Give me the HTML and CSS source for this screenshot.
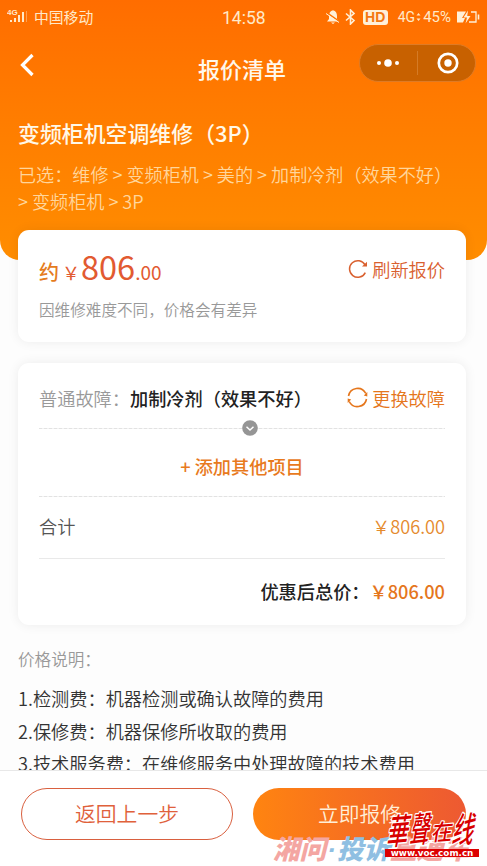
FILE: index.html
```html
<!DOCTYPE html>
<html lang="zh-CN">
<head>
<meta charset="utf-8">
<title>报价清单</title>
<link rel="stylesheet" href="styles.css">
</head>
<body>
<div class="screen">
  <header class="hero">
    <div class="status">
      <svg class="signal" width="22" height="18" viewBox="0 0 22 18"><g fill="#ffe9c8"><rect x="3" y="12" width="2" height="2"/><rect x="7" y="10" width="2" height="4"/><rect x="11" y="7" width="2" height="7"/><rect x="15" y="4" width="2" height="10"/><rect x="19" y="3" width="1" height="11" opacity=".4"/></g><text x="0" y="7" class="tiny">4G</text></svg>
      <span class="carrier">中国移动</span>
      <span class="clock">14:58</span>
      <div class="indicators">
        <svg width="14" height="16" viewBox="0 0 14 16"><path d="M7 1.200C4.200 1.800 3 4 3 7v3L1 12.500h12L11 10V7C11 4 9.800 1.800 7 1.200zM5 13.500h4L7 15z" fill="#fff0d8"/><path d="M0 3l14 10" stroke="#ff7400" stroke-width="1.500"/><path d="M0 4.500l13 9" stroke="#fff0d8"/></svg>
        <svg width="11" height="16" viewBox="0 0 11 16"><path d="M1 4.500l8 7L5.500 15V1L9 4.500l-8 7" fill="none" stroke="#fff0d8" stroke-width="1.600"/></svg>
        <span class="hd">HD</span>
        <span class="net">4G<svg width="5" height="10" viewBox="0 0 5 10"><path d="M.5 3.500L2.500 1l2 2.500zM.5 6.500L2.500 9l2-2.500z" fill="#ffe9c8"/></svg></span>
        <span class="percent">45%</span>
        <svg class="battery" width="24" height="14" viewBox="0 0 24 14"><path d="M1 1.500h9L6 8h3l-2 4.500H1z" fill="#fff0d8"/><path d="M12 .5L7.500 7.500H11L9.500 13.500 14.500 6H11.200z" fill="#fff0d8"/><path d="M15 2h5v10h-7" fill="none" stroke="#fff0d8" stroke-width="1.300"/><path d="M22.500 4.500v5" stroke="#fff0d8" stroke-width="1.600"/></svg>
      </div>
    </div>
    <nav class="nav">
      <svg class="back" width="16" height="24" viewBox="0 0 16 24"><path d="M13.500 2L3.500 12l10 10" fill="none" stroke="#fff" stroke-width="3.200"/></svg>
      <h1 class="nav-title">报价清单</h1>
      <div class="capsule">
        <svg width="24" height="10" viewBox="0 0 24 10"><g fill="#fff"><circle cx="3" cy="5" r="2"/><circle cx="12" cy="5" r="3.800"/><circle cx="21" cy="5" r="2"/></g></svg>
        <i class="capsule-line"></i>
        <svg width="22" height="22" viewBox="0 0 22 22"><circle cx="11" cy="11" r="9.200" fill="none" stroke="#fff" stroke-width="2.700"/><circle cx="11" cy="11" r="3.700" fill="#fff"/></svg>
      </div>
    </nav>
    <h2 class="service">变频柜机空调维修（3P）</h2>
    <p class="chosen">已选：维修 &gt; 变频柜机 &gt; 美的 &gt; 加制冷剂（效果不好）<br>&gt; 变频柜机 &gt; 3P</p>
  </header>

  <main class="content">
    <section class="card quote">
      <div class="quote-row">
        <div class="price"><span class="about">约</span><span class="yen">￥</span><span class="big">806</span><span class="cents">.00</span></div>
        <div class="action refresh">
          <svg width="20" height="20" viewBox="0 0 20 20"><path d="M17.300 13.600A8.300 8.300 0 1 1 17 5.800" fill="none" stroke="#d9602f" stroke-width="1.500"/><path d="M19 2.800V7.600H14z" fill="#d9602f"/></svg>
          <span>刷新报价</span>
        </div>
      </div>
      <p class="hint">因维修难度不同，价格会有差异</p>
    </section>

    <section class="card detail">
      <div class="fault">
        <span class="fault-label">普通故障：</span><span class="fault-name">加制冷剂（效果不好）</span>
        <div class="action change">
          <svg width="21" height="21" viewBox="0 0 21 21"><g fill="none" stroke="#e5761c" stroke-width="1.600"><path d="M1.500 9A9.200 9.200 0 0 1 18.800 6.500"/><path d="M19.500 12A9.200 9.200 0 0 1 2.200 14.500"/></g><path d="M20.300 5v4.500L16.800 8.500zM.7 16v-4.500L4.200 12.500z" fill="#e5761c"/></svg>
          <span>更换故障</span>
        </div>
      </div>
      <div class="divider dashed"><svg class="expand" width="16" height="16" viewBox="0 0 16 16"><circle cx="8" cy="8" r="7.800" fill="#959595"/><path d="M4.500 6.800L8 10l3.500-3.200" fill="none" stroke="#fff" stroke-width="1.500"/></svg></div>
      <div class="add">+ 添加其他项目</div>
      <div class="divider dashed"></div>
      <div class="sum"><span>合计</span><span class="sum-price">￥806.00</span></div>
      <div class="divider"></div>
      <div class="total"><span>优惠后总价：</span><span class="total-price">￥806.00</span></div>
    </section>

    <section class="notes">
      <h3>价格说明：</h3>
      <p>1.检测费：机器检测或确认故障的费用</p>
      <p>2.保修费：机器保修所收取的费用</p>
      <p>3.技术服务费：在维修服务中处理故障的技术费用</p>
    </section>
  </main>

  <footer class="footer">
    <button class="btn outline">返回上一步</button>
    <button class="btn solid">立即报修</button>
    <div class="channel"><span class="pink">湘问</span><span class="blue"><span class="dot">·</span>投诉</span><span class="pink">直通车</span></div>
    <div class="stamp">
      <svg width="96" height="45" viewBox="0 0 96 45"><g class="brush"><text transform="translate(1 41) rotate(-5) skewX(-16) scale(.74 1.200)" font-size="29">華</text><text transform="translate(24 39) rotate(-5) skewX(-16) scale(.68 1.200)" font-size="29">聲</text><text transform="translate(46 37) rotate(-5) skewX(-14) scale(.8 .85)" font-size="26">在</text><text transform="translate(66 39) rotate(-3) skewX(-16) scale(.74 1.200)" font-size="29">线</text></g></svg>
      <div class="site">www.voc.com.cn</div>
    </div>
  </footer>
</div>
</body>
</html>
```
FILE: styles.css
```css
* { box-sizing: border-box; margin: 0; padding: 0; }
body {
  width: 487px; height: 866px; overflow: hidden;
  background: #fdfdfd; color: #333;
  font-family: "Noto Sans CJK SC", sans-serif;
  font-size: 18.200px;
}
svg { display: block; flex: none; }
.screen { width: 487px; height: 866px; display: flex; flex-direction: column; overflow: hidden; }
.hero {
  flex: none; height: 260px; border-radius: 0 0 20px 20px;
  background: linear-gradient(#ff6d00, #ff7b00 40%, #ff8d00);
}
.status { height: 34px; padding: 0 7px; display: grid; grid-template-columns: 27px 188px 1fr auto; align-items: center; color: #ffe9c8; font-size: 14.800px; line-height: 32px; }
.tiny { font: bold 8px "Liberation Sans", sans-serif; fill: #ffe9c8; }
.clock { font-family: Roboto, sans-serif; font-size: 17.500px; padding-top: 1px; }
.indicators { display: flex; align-items: center; font-family: Roboto, sans-serif; font-size: 15px; }
.indicators svg:nth-child(2) { margin: 0 7px 0 5px; }
.hd { width: 25px; height: 15px; border-radius: 3px; background: #fff0d8; color: #f47710; font: bold 14px/15px "Liberation Sans", sans-serif; text-align: center; }
.net { display: flex; align-items: center; gap: 1px; margin-left: 10px; font-size: 14px; }
.percent { margin: 0 5px 0 2px; font-size: 15px; }
.nav { position: relative; height: 74px; display: flex; align-items: center; justify-content: center; padding: 0 3px 7px 0; }
.back { position: absolute; left: 19px; top: 19px; }
.nav-title { font-size: 22px; font-weight: 500; line-height: 30px; color: #fff8ec; }
.capsule { position: absolute; left: 359px; top: 10px; width: 117px; height: 38px; border-radius: 19px; border: 1px solid #df7b25; background: #c86100; display: flex; align-items: center; padding: 0 16px; }
.capsule-line { width: 1px; height: 24px; background: #d57b26; margin: 0 19px 0 17px; flex: none; }
.service { margin: 10px 0 0 18px; font-size: 21.900px; line-height: 30px; font-weight: 500; color: #fff8e8; white-space: nowrap; }
.chosen { margin: 13px 0 0 18px; font-size: 18.100px; line-height: 27px; color: #ffd69c; font-weight: 350; white-space: nowrap; }
.content { margin: -30px 18px 0; width: 448px; height: 540px; flex: none; }
.card { position: relative; background: #fff; border-radius: 11px; box-shadow: 0 0 12px rgba(0,0,0,.07); padding: 0 21px; }
.quote { height: 112px; padding-top: 14px; }
.quote-row { height: 49px; display: flex; justify-content: space-between; align-items: center; }
.price { display: flex; align-items: baseline; line-height: 48px; font-weight: 400; color: #e25a31; }
.about { font-size: 20px; color: #e57c1e; font-weight: 500; }
.yen { font-size: 18px; margin-left: 3px; }
.big { font-size: 32.500px; margin-left: 1px; }
.cents { font-size: 19px; }
.action { display: flex; align-items: center; gap: 4px; font-weight: 350; }
.refresh { color: #d9602f; }
.hint { font-size: 15.600px; line-height: 33px; color: #999; font-weight: 350; }
.detail { margin-top: 21px; height: 262px; }
.fault { height: 65px; padding-top: 4px; display: flex; align-items: center; white-space: nowrap; }
.fault-label { color: #999; font-weight: 350; }
.fault-name { color: #222; font-weight: 500; }
.change { margin-left: auto; color: #e5761c; }
.divider { position: relative; height: 1px; background: #e9e9e9; }
.dashed { background: repeating-linear-gradient(90deg, #e2e2e2 0 3px, #f2f2f2 3px 5px); }
.expand { position: absolute; left: 203px; top: -8px; }
.add { height: 67px; line-height: 74px; text-align: center; font-weight: 500; color: #e87a1d; }
.sum { height: 61px; padding-bottom: 3px; display: flex; justify-content: space-between; align-items: center; color: #555; font-weight: 350; }
.sum-price { color: #e58a2d; }
.total { height: 66px; padding-bottom: 2px; display: flex; justify-content: flex-end; align-items: center; font-weight: 500; color: #222; }
.total-price { color: #e5761c; }
.notes { padding-top: 17px; white-space: nowrap; }
.notes h3 { font-size: 16.600px; font-weight: 350; line-height: 34px; color: #999; margin-bottom: 6px; }
.notes p { line-height: 32.500px; color: #333; font-weight: 350; }
.footer { position: relative; flex: none; height: 96px; border-top: 1px solid #e8e8e8; background: #fff; display: flex; gap: 20px; padding: 17px 21px 0; }
.btn { height: 52px; border-radius: 26px; font: 350 20.800px/48px "Noto Sans CJK SC", sans-serif; padding-bottom: 2px; }
.outline { width: 212px; border: 1.500px solid #d9603f; color: #e0613b; background: #fff; }
.solid { width: 213px; border: 0; color: #ffefd8; background: linear-gradient(90deg, #ff8410, #ed5932); }
.channel { position: absolute; left: 273px; top: 62px; font-size: 26.500px; line-height: 30px; font-weight: 900; font-style: italic; white-space: nowrap; display: flex; }
.channel .dot { display: inline-block; width: 11px; font-family: "Liberation Sans", sans-serif; text-align: center; }
.pink { color: #f4a6a2; }
.blue { color: #8fbfe2; }
.stamp { position: absolute; left: 385px; top: 33px; width: 96px; }
.brush { fill: #d80000; stroke: #fff; stroke-width: 2.500; paint-order: stroke; stroke-linejoin: round; font-family: "Noto Sans CJK TC", "Noto Sans CJK SC", sans-serif; font-weight: 500; }
.stamp svg { overflow: visible; }
.site { width: 94px; height: 8px; background: #dc0000; color: #fff; font: bold 8.800px/8px "DejaVu Sans", sans-serif; text-align: center; }
```
